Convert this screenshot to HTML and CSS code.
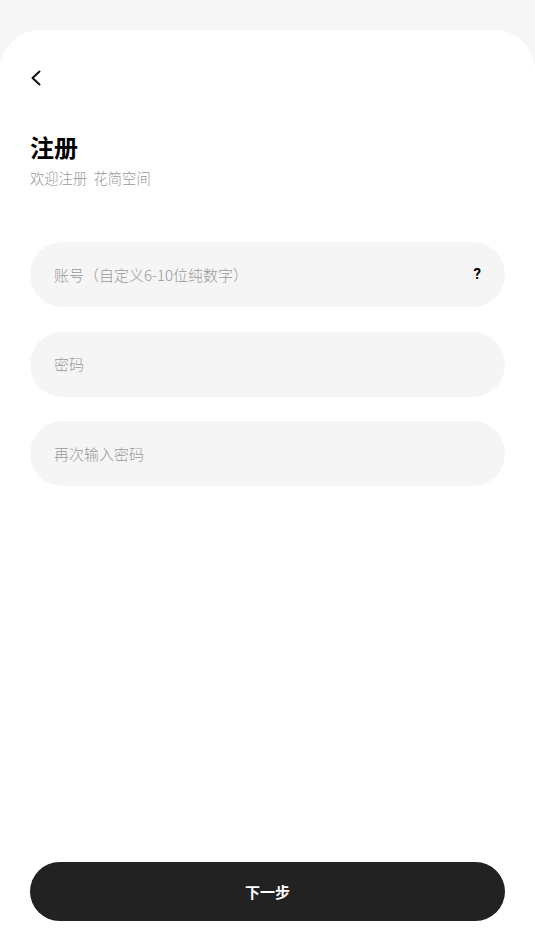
FILE: index.html
```html
<!DOCTYPE html>
<html lang="zh-CN">
<head>
<meta charset="utf-8">
<title>注册</title>
<link rel="stylesheet" href="styles.css">
</head>
<body>
<main class="card">
  <button class="back" aria-label="返回">
    <svg width="12" height="16" viewBox="0 0 12 16"><path d="M9.5 1.5 L2.5 8 L9.5 14.5" fill="none" stroke="#111" stroke-width="2" stroke-linecap="round" stroke-linejoin="round"/></svg>
  </button>
  <h1 class="title">注册</h1>
  <p class="subtitle">欢迎注册&nbsp;&nbsp;花简空间</p>
  <form class="form">
    <div class="field">
      <span class="placeholder">账号（自定义6-10位纯数字）</span>
      <span class="help">?</span>
    </div>
    <div class="field"><span class="placeholder">密码</span></div>
    <div class="field"><span class="placeholder">再次输入密码</span></div>
  </form>
  <button class="next">下一步</button>
</main>
</body>
</html>
```
FILE: styles.css
```css
* { box-sizing: border-box; }
html, body { margin: 0; padding: 0; }
body {
  background: #f6f6f6;
  font-family: "Noto Sans CJK SC", "Noto Sans", sans-serif;
  min-height: 100vh;
  display: flex;
  flex-direction: column;
  padding-top: 30px;
}
.card {
  flex: 1;
  background: #fff;
  border-radius: 40px 40px 0 0;
  padding: 0 30px 30px;
  display: flex;
  flex-direction: column;
}
.back {
  margin-top: 40px;
  width: 24px;
  height: 16px;
  padding: 0;
  border: 0;
  background: none;
  display: flex;
  align-items: center;
}
.title {
  margin: 45px 0 0;
  font-size: 24px;
  line-height: 32px;
  font-weight: 700;
  color: #000;
}
.subtitle {
  margin: 5px 0 0;
  font-size: 14.3px;
  line-height: 20px;
  font-weight: 300;
  color: #999;
}
.form {
  margin-top: 54px;
  display: flex;
  flex-direction: column;
  gap: 24.5px;
}
.field {
  height: 65px;
  border-radius: 33px;
  background: #f5f5f5;
  display: flex;
  align-items: center;
  justify-content: space-between;
  padding: 0 24px 1px;
}
.placeholder {
  font-size: 15px;
  font-weight: 300;
  color: #999;
}
.help {
  font-family: "Roboto", "Liberation Sans", sans-serif;
  font-size: 15px;
  font-weight: 700;
  color: #000;
}
.next {
  margin-top: auto;
  height: 59px;
  border: 0;
  border-radius: 30px;
  background: #222;
  color: #fff;
  font-family: "Noto Sans CJK SC", sans-serif;
  font-size: 15px;
  font-weight: 700;
}
```
